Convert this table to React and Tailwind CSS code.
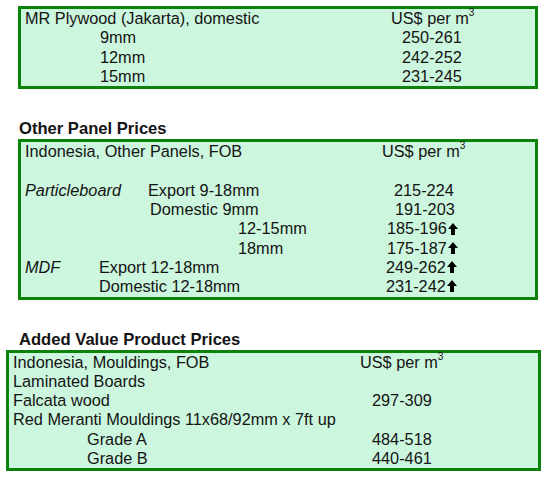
import React from 'react'

const Up = () => (
  <svg width="10" height="12" viewBox="0 0 10 12" className="inline-block ml-[1px] -mt-[3px]">
    <path d="M5 0 L10 6 L7 6 L7 12 L3 12 L3 6 L0 6 Z" fill="#000" />
  </svg>
)

const Per = () => (
  <span>
    US$ per m<sup className="text-[10px] -top-[8px]">3</sup>
  </span>
)

// one table row: cells given as [left offset, content]
function Row({ cells }) {
  return (
    <div className="relative h-[19.3px] leading-[19.3px] whitespace-nowrap">
      {cells.map(([x, c], i) => (
        <span key={i} className="absolute top-0" style={{ left: x }}>
          {c}
        </span>
      ))}
    </div>
  )
}

export default function App() {
  return (
    <div className="w-[548px] h-[478px] bg-white text-[16.3px] text-[#141414] pt-[6px]" style={{ fontFamily: '"Liberation Sans", Arial, sans-serif' }}>
      {/* Plywood */}
      <div className="ml-[18px] w-[520px] border-[3px] border-[#0b830b] bg-[#ccf6dd]">
        <Row cells={[[4, 'MR Plywood (Jakarta), domestic'], [370, <Per />]]} />
        <Row cells={[[79, '9mm'], [381, '250-261']]} />
        <Row cells={[[79, '12mm'], [381, '242-252']]} />
        <Row cells={[[79, '15mm'], [381, '231-245']]} />
      </div>

      {/* Other panels */}
      <h2 className="mt-[30px] ml-[19px] text-[16.6px] font-bold leading-[19px]">Other Panel Prices</h2>
      <div className="mt-[1px] ml-[18px] w-[520px] border-[3px] border-[#0b830b] bg-[#ccf6dd]">
        <Row cells={[[4, 'Indonesia, Other Panels, FOB'], [361, <Per />]]} />
        <Row cells={[]} />
        <Row cells={[[4, <i>Particleboard</i>], [127, 'Export 9-18mm'], [373, '215-224']]} />
        <Row cells={[[129, 'Domestic 9mm'], [374, '191-203']]} />
        <Row cells={[[217, '12-15mm'], [366, <>185-196<Up /></>]]} />
        <Row cells={[[217, '18mm'], [366, <>175-187<Up /></>]]} />
        <Row cells={[[4, <i>MDF</i>], [78, 'Export 12-18mm'], [365, <>249-262<Up /></>]]} />
        <Row cells={[[78, 'Domestic 12-18mm'], [365, <>231-242<Up /></>]]} />
      </div>

      {/* Added value */}
      <h2 className="mt-[30px] ml-[19px] text-[16.6px] font-bold leading-[19px]">Added Value Product Prices</h2>
      <div className="mt-[1px] ml-[6px] w-[535px] border-[3px] border-[#0b830b] bg-[#ccf6dd]">
        <Row cells={[[4, 'Indonesia, Mouldings, FOB'], [351, <Per />]]} />
        <Row cells={[[4, 'Laminated Boards']]} />
        <Row cells={[[4, 'Falcata wood'], [363, '297-309']]} />
        <Row cells={[[4, 'Red Meranti Mouldings 11x68/92mm x 7ft up']]} />
        <Row cells={[[78, 'Grade A'], [363, '484-518']]} />
        <Row cells={[[78, 'Grade B'], [363, '440-461']]} />
      </div>
    </div>
  )
}
